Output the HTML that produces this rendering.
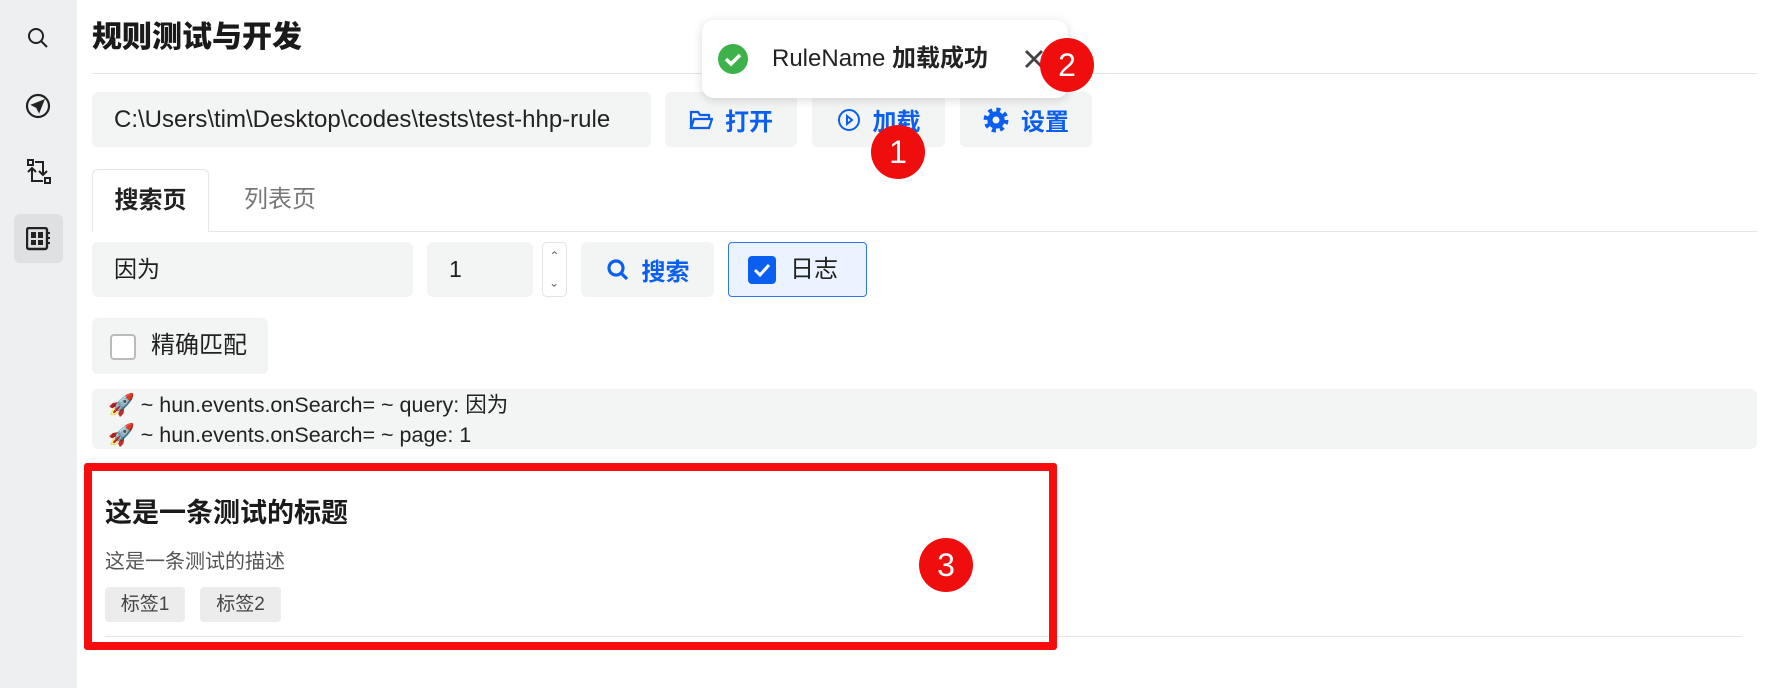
<!DOCTYPE html>
<html><head><meta charset="utf-8"><style>
*{box-sizing:border-box;margin:0;padding:0}
body{width:1770px;height:688px;background:#fff;position:relative;overflow:hidden;font-family:"Liberation Sans","Noto Sans CJK SC",sans-serif;color:#1f1f1f}
.a{position:absolute}
.side{left:0;top:0;width:77px;height:688px;background:#eeeff0}
.box{background:#f3f4f4;border-radius:6px}
.btn{display:flex;align-items:center;justify-content:center;gap:12px;color:#0a5ff0;font-weight:bold;font-size:24px}
.badge{width:54px;height:54px;border-radius:50%;background:#f00d0d;color:#fff;font-size:32px;display:flex;align-items:center;justify-content:center}
</style></head><body>
<div class="a side"></div>
<svg class="a" style="left:26px;top:26px" width="24" height="24" viewBox="0 0 24 24" fill="none" stroke="#222" stroke-width="2"><circle cx="10" cy="10" r="7"/><path d="M15 15l6 6"/></svg>
<svg class="a" style="left:25px;top:93px" width="26" height="26" viewBox="0 0 26 26" fill="none" stroke="#222" stroke-width="2.2"><circle cx="13" cy="13" r="11"/><path d="M18 8l-10 4 4 2 2 4z" fill="#222"/></svg>
<svg class="a" style="left:25px;top:158px" width="28" height="28" viewBox="0 0 28 28" fill="none" stroke="#222" stroke-width="2"><rect x="3" y="2" width="5" height="5"/><path d="M10 4h8v13"/><path d="M14 13l4 4 4-4"/><rect x="20" y="20" width="5" height="5"/><path d="M18 23h-11v-12"/><path d="M3 14l4-4 4 4"/></svg>
<div class="a" style="left:14px;top:214px;width:49px;height:49px;background:#dfe0e2;border-radius:6px"></div>
<svg class="a" style="left:26px;top:227px" width="26" height="24" viewBox="0 0 26 24"><rect x="1" y="1" width="20" height="21" rx="2" fill="none" stroke="#222" stroke-width="2.4"/><rect x="5" y="5" width="5" height="6" fill="#222"/><rect x="12" y="5" width="5" height="6" fill="#222"/><rect x="5" y="13" width="5" height="5" fill="#222"/><rect x="12" y="13" width="5" height="5" fill="#222"/><path d="M21 6h3M21 11h3M21 16h3" stroke="#222" stroke-width="2"/></svg>

<div class="a" style="left:92px;top:19px;font-size:30px;font-weight:900;line-height:38px;color:#1a1a1a">规则测试与开发</div>
<div class="a" style="left:92px;top:73px;width:1665px;height:1px;background:#e5e6e8"></div>

<div class="a box" style="left:92px;top:92px;width:559px;height:55px;font-size:24px;line-height:55px;padding-left:22px;color:#222;white-space:nowrap;overflow:hidden">C:\Users\tim\Desktop\codes\tests\test-hhp-rule</div>
<div class="a box btn" style="left:665px;top:92px;width:132px;height:55px"><svg width="24" height="22" viewBox="0 0 24 22" fill="none" stroke="#0a5ff0" stroke-width="2.2"><path d="M2 19V3h7l2 3h9v4"/><path d="M2 19l3-9h18l-3 9z"/></svg>打开</div>
<div class="a box btn" style="left:812px;top:92px;width:133px;height:55px"><svg width="24" height="24" viewBox="0 0 24 24" fill="none" stroke="#0a5ff0" stroke-width="2"><circle cx="12" cy="12" r="10"/><path d="M10 8l5 4-5 4z"/></svg>加载</div>
<div class="a box btn" style="left:960px;top:92px;width:132px;height:55px"><svg width="26" height="26" viewBox="0 0 24 24"><circle cx="12" cy="12" r="9" fill="none" stroke="#0a5ff0" stroke-width="5" stroke-dasharray="3.5 3.57"/><circle cx="12" cy="12" r="8" fill="#0a5ff0"/><circle cx="12" cy="12" r="3.2" fill="#f3f4f4"/></svg>设置</div>

<div class="a" style="left:702px;top:20px;width:366px;height:78px;background:#fff;border-radius:12px;box-shadow:0 2px 10px rgba(0,0,0,.15)"></div>
<svg class="a" style="left:718px;top:44px" width="30" height="30" viewBox="0 0 30 30"><circle cx="15" cy="15" r="15" fill="#3db24b"/><path d="M8 15l5 5 9-9" fill="none" stroke="#fff" stroke-width="3.5"/></svg>
<div class="a" style="left:772px;top:44px;font-size:24px;line-height:30px;color:#222;white-space:nowrap">RuleName <b>加载成功</b></div>
<svg class="a" style="left:1024px;top:49px" width="20" height="20" viewBox="0 0 20 20" stroke="#444" stroke-width="2.8"><path d="M2 2l16 16M18 2L2 18"/></svg>
<div class="a badge" style="left:1040px;top:38px">2</div>
<div class="a badge" style="left:871px;top:125px">1</div>

<div class="a" style="left:92px;top:169px;width:117px;height:63px;border:1px solid #e5e6e8;border-bottom:none;border-radius:6px 6px 0 0;background:#fff;font-size:24px;font-weight:bold;line-height:62px;text-align:center;color:#222">搜索页</div>
<div class="a" style="left:244px;top:169px;font-size:24px;line-height:62px;color:#777">列表页</div>
<div class="a" style="left:208px;top:231px;width:1549px;height:1px;background:#e5e6e8"></div>

<div class="a box" style="left:92px;top:242px;width:321px;height:55px;font-size:23px;line-height:55px;padding-left:22px">因为</div>
<div class="a box" style="left:427px;top:242px;width:106px;height:55px;font-size:23px;line-height:55px;padding-left:22px">1</div>
<div class="a" style="left:542px;top:242px;width:25px;height:55px;border:1px solid #e3e3e3;border-radius:5px;font-size:12px;color:#666;text-align:center;line-height:26px">⌃<br><span style="display:inline-block;transform:rotate(180deg)">⌃</span></div>
<div class="a box btn" style="left:581px;top:242px;width:133px;height:55px"><svg width="24" height="24" viewBox="0 0 24 24" fill="none" stroke="#0a5ff0" stroke-width="3.2"><circle cx="10" cy="10" r="7"/><path d="M15 15l6 6"/></svg>搜索</div>
<div class="a" style="left:728px;top:242px;width:139px;height:55px;background:#eaf3ff;border:1px solid #2f74e8;border-radius:4px"></div>
<svg class="a" style="left:748px;top:256px" width="28" height="28" viewBox="0 0 28 28"><rect width="28" height="28" rx="4" fill="#0a5ff0"/><path d="M7 14l5 5 9-10" fill="none" stroke="#fff" stroke-width="3"/></svg>
<div class="a" style="left:790px;top:255px;font-size:24px;line-height:30px;color:#222">日志</div>

<div class="a box" style="left:92px;top:318px;width:176px;height:56px"></div>
<div class="a" style="left:110px;top:334px;width:26px;height:26px;border:2px solid #bbb;border-radius:4px;background:#fff"></div>
<div class="a" style="left:151px;top:331px;font-size:24px;line-height:30px;color:#222">精确匹配</div>

<div class="a box" style="left:92px;top:389px;width:1665px;height:60px;font-size:21.5px;line-height:30px;padding:1px 0 0 16px;color:#222;white-space:nowrap">🚀 ~ hun.events.onSearch= ~ query: 因为<br>🚀 ~ hun.events.onSearch= ~ page: 1</div>

<div class="a" style="left:105px;top:636px;width:1637px;height:1px;background:#e5e6e8"></div>
<div class="a" style="left:84px;top:463px;width:973px;height:187px;border:8px solid #f70d0d;border-radius:3px"></div>
<div class="a" style="left:105px;top:496px;font-size:27px;font-weight:bold;line-height:34px;color:#1a1a1a">这是一条测试的标题</div>
<div class="a" style="left:105px;top:549px;font-size:20px;line-height:26px;color:#555">这是一条测试的描述</div>
<div class="a" style="left:105px;top:587px;width:80px;height:35px;background:#ececec;border-radius:4px;font-size:19px;line-height:35px;text-align:center;color:#444">标签1</div>
<div class="a" style="left:200px;top:587px;width:81px;height:35px;background:#ececec;border-radius:4px;font-size:19px;line-height:35px;text-align:center;color:#444">标签2</div>
<div class="a badge" style="left:919px;top:538px">3</div>
</body></html>
